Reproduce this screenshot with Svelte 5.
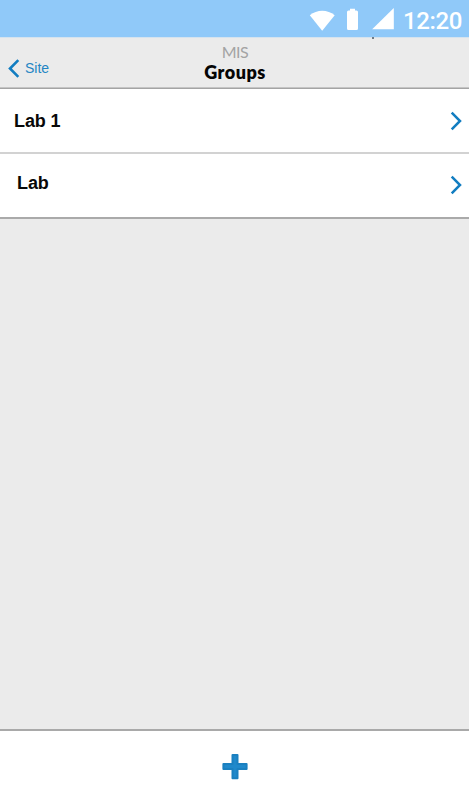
<script lang="ts">
  interface Group {
    name: string;
    indented?: boolean;
  }

  const time = '12:20';
  const groups: Group[] = [{ name: 'Lab 1' }, { name: 'Lab', indented: true }];
</script>

<div class="screen">
  <div class="status">
    <svg width="88" height="37" viewBox="0 0 88 37" fill="#fff">
      <path d="M0.8 15.2C8 9.2 18.5 9.2 25.7 15.2L13.2 30.8Z" />
      <path
        d="M39.500 10.500h1.500v-1.800h5v1.800h1.500a1.500 1.500 0 0 1 1.500 1.500v16.500a1.500 1.500 0 0 1-1.500 1.500h-8a1.500 1.500 0 0 1-1.500-1.500v-16.500a1.500 1.500 0 0 1 1.500-1.500z"
      />
      <path d="M63.2 29.2L84.8 8V29.2Z" />
    </svg>
    <span class="time">{time}</span>
  </div>

  <header class="header">
    <button class="back">
      <svg width="12" height="19" viewBox="0 0 12 19" fill="none">
        <path d="M10.3 1.2L2 9.5L10.3 17.8" stroke="#127dc1" stroke-width="2.6" />
      </svg>
      <span>Site</span>
    </button>
    <div class="titles">
      <div class="site-name">MIS</div>
      <h1 class="title">Groups</h1>
    </div>
    <span class="tick"></span>
  </header>

  <main class="content">
    <div class="list">
      {#each groups as group}
        <button class="row" class:indented={group.indented}>
          <span class="name">{group.name}</span>
          <svg width="12" height="20" viewBox="0 0 12 20" fill="none">
            <path d="M1.7 1.7L10 10L1.7 18.3" stroke="#127dc1" stroke-width="2.5" />
          </svg>
        </button>
      {/each}
    </div>
  </main>

  <footer class="footer">
    <button class="add" aria-label="Add group">
      <svg width="27" height="27" viewBox="0 0 27 27">
        <path
          d="M11.5 2h5v9.1h9.1v5h-9.1v9.1h-5v-9.1h-9.100v-5h9.100z"
          fill="#2089cb"
          stroke="#1b80c0"
          stroke-width="2"
          stroke-linejoin="round"
        />
      </svg>
    </button>
  </footer>
</div>

<style>
  :global(body) {
    margin: 0;
  }

  .screen {
    display: flex;
    flex-direction: column;
    height: 800px;
    background: #ebebeb;
    font-family: 'Liberation Sans', Arial, sans-serif;
    overflow: hidden;
  }

  button {
    background: none;
    border: none;
    padding: 0;
    font: inherit;
    text-align: left;
    cursor: pointer;
  }

  svg {
    display: block;
    flex: none;
  }

  .status {
    display: flex;
    justify-content: flex-end;
    height: 37px;
    padding-right: 7px;
    background: #90c9f9;
    color: #fff;
  }

  .time {
    width: 59px;
    margin-left: 6px;
    font-family: Roboto, sans-serif;
    font-size: 24px;
    font-weight: 500;
    line-height: 43px;
    letter-spacing: -0.4px;
    white-space: nowrap;
  }

  .header {
    position: relative;
    display: grid;
    grid-template-columns: 1fr auto 1fr;
    box-sizing: border-box;
    height: 51px;
    border-top: 1px solid #d5e3ef;
    border-bottom: 1px solid #c4c4c4;
  }

  /* stray mark just below the status bar */
  .tick {
    position: absolute;
    top: -1px;
    left: 372px;
    width: 2px;
    height: 2px;
    background: #6d7b87;
  }

  .back {
    display: flex;
    align-items: center;
    align-self: start;
    gap: 5px;
    height: 19px;
    margin: 21px 0 0 8px;
    color: #2486c4;
    font-size: 14px;
    line-height: 19px;
  }

  .titles {
    padding: 4px 0 0 1px;
    font-family: Lato, sans-serif;
    text-align: center;
  }

  .site-name {
    color: #a3a3a3;
    font-size: 16px;
    line-height: 20px;
    letter-spacing: -0.5px;
  }

  .title {
    margin: 0;
    color: #050505;
    font-size: 18px;
    font-weight: 800;
    line-height: 20px;
    letter-spacing: 0.5px;
  }

  .content {
    flex: 1;
  }

  .list {
    border-top: 1px solid #a4a4a4;
    border-bottom: 2px solid #aaa;
    background: #fff;
  }

  .row {
    display: flex;
    align-items: center;
    justify-content: space-between;
    box-sizing: border-box;
    width: 100%;
    height: 63px;
    padding: 1px 7px 0 14px;
    color: #080808;
    font-size: 18px;
    font-weight: bold;
  }

  .row + .row {
    height: 65px;
    padding-top: 0;
    padding-bottom: 2px;
    border-top: 2px solid #d2d2d2;
  }

  .name {
    letter-spacing: -0.1px;
  }

  .row.indented {
    padding-left: 17px;
  }

  .indented .name {
    margin-top: -3px;
  }

  .footer {
    display: flex;
    justify-content: center;
    box-sizing: border-box;
    height: 71px;
    padding-top: 22px;
    border-top: 2px solid #a9a9a9;
    background: #fff;
  }

  .add {
    height: 27px;
  }
</style>
